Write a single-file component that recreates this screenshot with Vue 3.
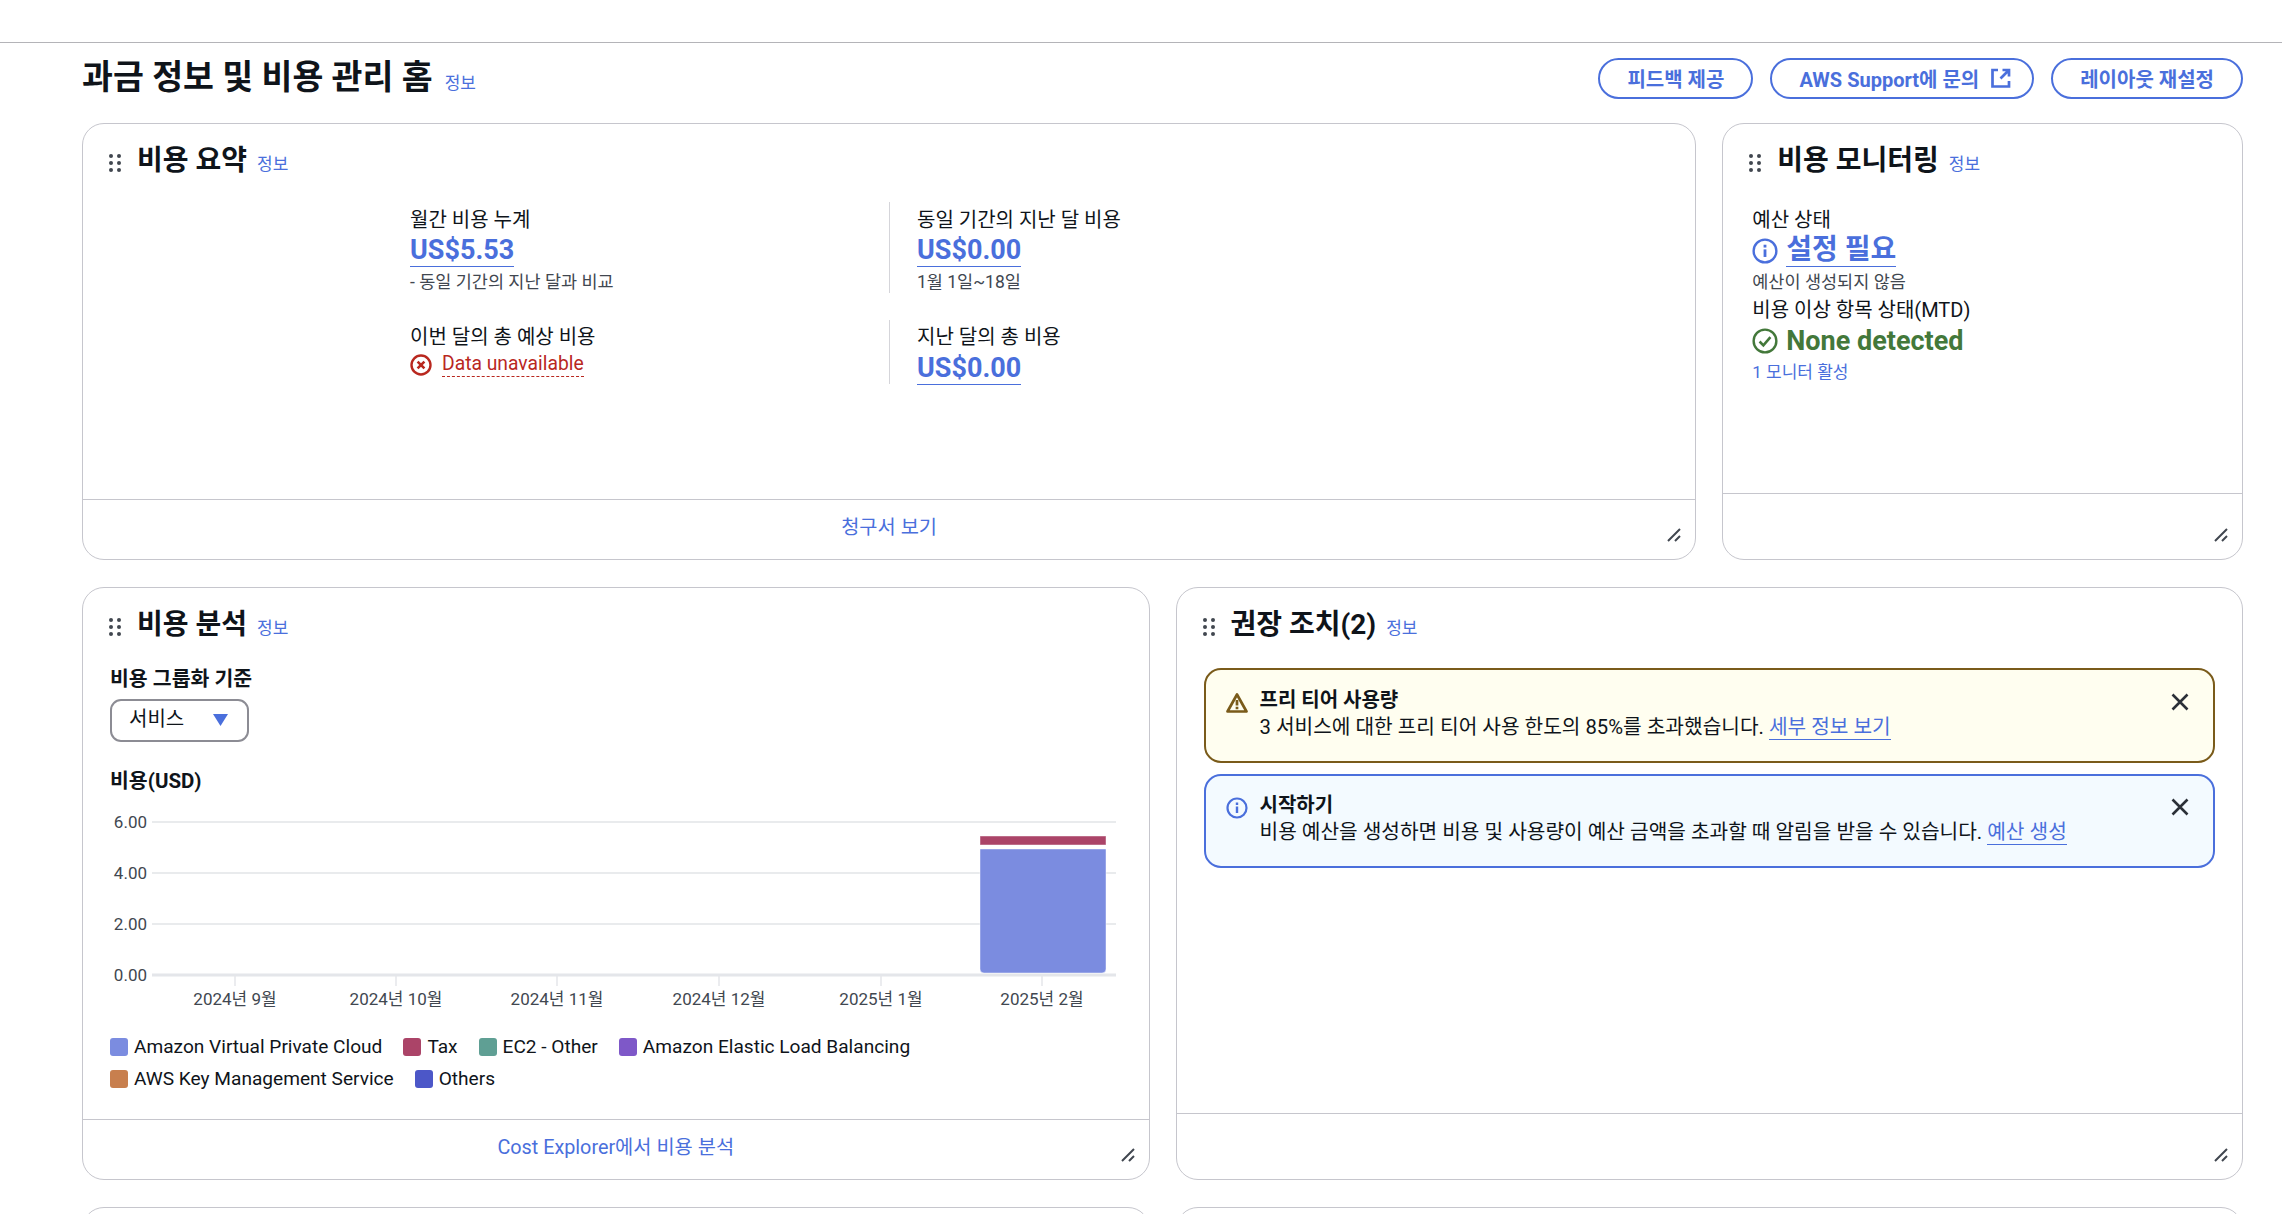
<script setup>
const months = [
  { label: '2024년 9월', x: 235 },
  { label: '2024년 10월', x: 396 },
  { label: '2024년 11월', x: 557 },
  { label: '2024년 12월', x: 719 },
  { label: '2025년 1월', x: 881 },
  { label: '2025년 2월', x: 1042 },
]
const yTicks = [
  { label: '6.00', y: 822 },
  { label: '4.00', y: 873 },
  { label: '2.00', y: 924 },
]
const legend = [
  { name: 'Amazon Virtual Private Cloud', color: '#7b8ce0' },
  { name: 'Tax', color: '#ab4468' },
  { name: 'EC2 - Other', color: '#5f9f94' },
  { name: 'Amazon Elastic Load Balancing', color: '#7e58c8' },
  { name: 'AWS Key Management Service', color: '#c87f4e' },
  { name: 'Others', color: '#4c57c8' },
]
</script>

<template>
  <div class="page">
    <div class="topbar"></div>

    <header class="title-row">
      <div class="title-left">
        <h1>과금 정보 및 비용 관리 홈</h1>
        <a class="info">정보</a>
      </div>
      <div class="actions">
        <button class="btn">피드백 제공</button>
        <button class="btn with-icon">
          AWS Support에 문의
          <svg class="ext" viewBox="0 0 20 20" width="20" height="20" fill="none" stroke="currentColor" stroke-width="2.7">
            <path d="M7 2H1.5v16.5H18V13" />
            <path d="M11.5 2H18v6.5M18 2L9.5 10.5" />
          </svg>
        </button>
        <button class="btn">레이아웃 재설정</button>
      </div>
    </header>

    <div class="grid">
      <!-- 비용 요약 -->
      <section class="card span3">
        <div class="card-head">
          <span class="grip"><i v-for="n in 6" :key="n"></i></span>
          <h2>비용 요약</h2>
          <a class="info">정보</a>
        </div>
        <div class="card-body summary">
          <div class="cell">
            <div class="label">월간 비용 누계</div>
            <a class="value">US$5.53</a>
            <div class="sub">- 동일 기간의 지난 달과 비교</div>
          </div>
          <div class="cell sep">
            <div class="label">동일 기간의 지난 달 비용</div>
            <a class="value">US$0.00</a>
            <div class="sub">1월 1일~18일</div>
          </div>
          <div class="cell lower">
            <div class="label">이번 달의 총 예상 비용</div>
            <div class="unavail">
              <svg viewBox="0 0 22 22" width="22" height="22" fill="none" stroke="#b9281f">
                <circle cx="11" cy="11" r="9.5" stroke-width="2.4" />
                <path d="M7.6 7.6l6.8 6.8M14.4 7.6l-6.8 6.8" stroke-width="2.6" />
              </svg>
              <span>Data unavailable</span>
            </div>
          </div>
          <div class="cell sep lower">
            <div class="label">지난 달의 총 비용</div>
            <a class="value">US$0.00</a>
          </div>
        </div>
        <div class="card-foot">
          <a class="foot-link">청구서 보기</a>
          <svg class="resize" viewBox="0 0 14 14" width="14" height="14" stroke="#414750" stroke-width="2">
            <path d="M1 13L13 1M8 13l5-5" />
          </svg>
        </div>
      </section>

      <!-- 비용 모니터링 -->
      <section class="card">
        <div class="card-head">
          <span class="grip"><i v-for="n in 6" :key="n"></i></span>
          <h2>비용 모니터링</h2>
          <a class="info">정보</a>
        </div>
        <div class="card-body monitor">
          <div class="label">예산 상태</div>
          <div class="status">
            <svg viewBox="0 0 24 24" width="26" height="26" fill="none" stroke="#4a6fdc">
              <circle cx="12" cy="12" r="10.5" stroke-width="2.2" />
              <path d="M12 10.5v7" stroke-width="2.6" />
              <path d="M12 6.2v2.6" stroke-width="2.6" />
            </svg>
            <a class="value hangul">설정 필요</a>
          </div>
          <div class="sub">예산이 생성되지 않음</div>
          <div class="label anomaly">비용 이상 항목 상태(MTD)</div>
          <div class="status ok">
            <svg viewBox="0 0 24 24" width="26" height="26" fill="none" stroke="#43783a">
              <circle cx="12" cy="12" r="10.5" stroke-width="2.2" />
              <path d="M7 12.5l3.5 3.5L17 8.5" stroke-width="2.4" />
            </svg>
            <span>None detected</span>
          </div>
          <a class="monitors">1 모니터 활성</a>
        </div>
        <div class="card-foot tall">
          <svg class="resize" viewBox="0 0 14 14" width="14" height="14" stroke="#414750" stroke-width="2">
            <path d="M1 13L13 1M8 13l5-5" />
          </svg>
        </div>
      </section>

      <!-- 비용 분석 -->
      <section class="card span2">
        <div class="card-head">
          <span class="grip"><i v-for="n in 6" :key="n"></i></span>
          <h2>비용 분석</h2>
          <a class="info">정보</a>
        </div>
        <div class="card-body analysis">
          <div class="field-label">비용 그룹화 기준</div>
          <div class="select">
            <span>서비스</span>
            <svg viewBox="0 0 15 12" width="15" height="12"><path d="M0 0h15L7.5 12z" fill="#4a6fdc" /></svg>
          </div>
          <div class="field-label chart-title">비용(USD)</div>
          <!-- viewBox uses page coordinates so the numbers read like the screenshot -->
          <svg class="chart" viewBox="110 812 1020 200" width="1020" height="200">
            <line v-for="t in yTicks" :key="t.label" x1="152" x2="1116" :y1="t.y" :y2="t.y" stroke="#e9ebed" stroke-width="2" />
            <text v-for="t in yTicks" :key="'y' + t.label" x="147" :y="t.y + 6" text-anchor="end" class="tick">{{ t.label }}</text>
            <rect x="980" y="836" width="126" height="9" fill="#ab4468" stroke="#fff" stroke-opacity=".45" />
            <path d="M980 849h126v120a4 4 0 0 1-4 4H984a4 4 0 0 1-4-4z" fill="#7b8ce0" stroke="#fff" stroke-opacity=".45" />
            <line x1="152" x2="1116" y1="975" y2="975" stroke="#e4e6ea" stroke-width="3" />
            <text x="147" y="981" text-anchor="end" class="tick">0.00</text>
            <g v-for="m in months" :key="m.label">
              <line :x1="m.x" :x2="m.x" y1="976" y2="986" stroke="#e4e6ea" stroke-width="1.5" />
              <text :x="m.x" y="1005" text-anchor="middle" class="tick">{{ m.label }}</text>
            </g>
          </svg>
          <ul class="legend">
            <li v-for="l in legend" :key="l.name">
              <i :style="{ background: l.color }"></i>{{ l.name }}
            </li>
          </ul>
        </div>
        <div class="card-foot">
          <a class="foot-link">Cost Explorer에서 비용 분석</a>
          <svg class="resize" viewBox="0 0 14 14" width="14" height="14" stroke="#414750" stroke-width="2">
            <path d="M1 13L13 1M8 13l5-5" />
          </svg>
        </div>
      </section>

      <!-- 권장 조치 -->
      <section class="card span2">
        <div class="card-head">
          <span class="grip"><i v-for="n in 6" :key="n"></i></span>
          <h2>권장 조치(2)</h2>
          <a class="info">정보</a>
        </div>
        <div class="card-body alerts">
          <div class="alert warn">
            <svg class="alert-icon" viewBox="0 0 22 22" width="22" height="22" fill="none" stroke="#7a5b1a" stroke-width="2.7">
              <path d="M11 2.5L20.5 19.5h-19z" stroke-linejoin="round" />
              <path d="M11 8v5.5M11 14.8v2.4" />
            </svg>
            <div class="alert-text">
              <strong>프리 티어 사용량</strong>
              <p>3 서비스에 대한 프리 티어 사용 한도의 85%를 초과했습니다. <a>세부 정보 보기</a></p>
            </div>
            <svg class="close" viewBox="0 0 18 18" width="18" height="18" stroke="#2b3038" stroke-width="2.6">
              <path d="M1.5 1.5l15 15M16.5 1.5l-15 15" />
            </svg>
          </div>
          <div class="alert note">
            <svg class="alert-icon" viewBox="0 0 22 22" width="22" height="22" fill="none" stroke="#4a6fdc">
              <circle cx="11" cy="11" r="9.5" stroke-width="2.2" />
              <path d="M11 9.5v6.5M11 5.6v2.4" stroke-width="2.4" />
            </svg>
            <div class="alert-text">
              <strong>시작하기</strong>
              <p>비용 예산을 생성하면 비용 및 사용량이 예산 금액을 초과할 때 알림을 받을 수 있습니다. <a>예산 생성</a></p>
            </div>
            <svg class="close" viewBox="0 0 18 18" width="18" height="18" stroke="#2b3038" stroke-width="2.6">
              <path d="M1.5 1.5l15 15M16.5 1.5l-15 15" />
            </svg>
          </div>
        </div>
        <div class="card-foot tall">
          <svg class="resize" viewBox="0 0 14 14" width="14" height="14" stroke="#414750" stroke-width="2">
            <path d="M1 13L13 1M8 13l5-5" />
          </svg>
        </div>
      </section>

      <section class="card span2"></section>
      <section class="card span2"></section>
    </div>
  </div>
</template>

<style>
html, body {
  margin: 0;
  overflow: hidden;
  background: #fff;
}
</style>

<style scoped>
.page {
  height: 1214px;
  overflow: hidden;
  box-sizing: border-box;
  padding: 0 39px 0 82px;
  font-family: Roboto, "Noto Sans CJK KR", sans-serif;
  font-size: 20px;
  color: #0f141a;
  background: #fff;
}

.topbar {
  height: 42px;
  margin: 0 -39px 0 -82px;
  border-bottom: 1px solid #b4b4b8;
}

.title-row {
  height: 80px;
  box-sizing: border-box;
  padding-bottom: 10px;
  display: flex;
  align-items: center;
  justify-content: space-between;
}

.title-left {
  display: flex;
  align-items: baseline;
  gap: 12px;
}

h1 {
  margin: 0;
  font-size: 33.6px;
  font-weight: 700;
  line-height: 44px;
}

h2 {
  margin: 0;
  font-size: 28px;
  font-weight: 700;
  line-height: 36px;
}

.info {
  font-size: 17px;
  color: #4a6fdc;
}

.actions {
  display: flex;
  gap: 17px;
}

.btn {
  height: 41px;
  padding: 0 27px;
  display: flex;
  align-items: center;
  gap: 12px;
  box-sizing: border-box;
  border: 2px solid #4a6fdc;
  border-radius: 21px;
  background: #fff;
  color: #4a6fdc;
  font-family: inherit;
  font-size: 20px;
  font-weight: 700;
}

.btn.with-icon {
  padding-right: 21px;
}

.ext {
  flex: none;
}

.grid {
  display: grid;
  grid-template-columns: repeat(4, 1fr);
  grid-template-rows: 437px 593px 300px;
  column-gap: 26px;
  row-gap: 27px;
}

.card {
  display: flex;
  flex-direction: column;
  border: 1px solid #c6c6cd;
  border-radius: 22px;
  background: #fff;
  min-width: 0;
}

.span3 {
  grid-column: span 3;
}

.span2 {
  grid-column: span 2;
}

.card-head {
  display: flex;
  align-items: baseline;
  padding: 19px 26px 0;
  height: 36px;
}

.card-head h2 {
  margin-left: 16px;
}

.card-head .info {
  margin-left: 10px;
}

.grip {
  align-self: center;
  display: grid;
  grid-template-columns: 4px 4px;
  gap: 3px 4px;
  margin-top: 4px;
}

.grip i {
  width: 4px;
  height: 4px;
  border-radius: 50%;
  background: #414750;
}

.card-body {
  flex: 1;
  min-height: 0;
}

.card-foot {
  position: relative;
  height: 60px;
  box-sizing: border-box;
  padding-bottom: 8px;
  border-top: 1px solid #c6c6cd;
  display: flex;
  align-items: center;
  justify-content: center;
}

.card-foot.tall {
  height: 66px;
}

.foot-link {
  color: #4a6fdc;
  font-size: 19.8px;
}

.resize {
  position: absolute;
  right: 14px;
  bottom: 17px;
}

.summary {
  display: grid;
  grid-template-columns: 479px 479px;
  grid-template-rows: 91px 64px;
  row-gap: 27px;
  margin: 23px 0 0 327px;
  align-content: start;
}

.cell.sep {
  border-left: 1px solid #d5d5da;
  padding-left: 27px;
}

.label {
  font-size: 20px;
  line-height: 28px;
  margin-top: 4px;
}

.lower .label {
  margin: 3px 0 1px;
}

.value {
  display: inline-block;
  font-size: 27px;
  font-weight: 700;
  line-height: 32px;
  color: #4a6fdc;
  border-bottom: 1px solid #4a6fdc;
}

.value.hangul {
  font-size: 28px;
}

.sub {
  font-size: 17.5px;
  line-height: 24px;
  margin-top: 3px;
  color: #414750;
}

.unavail {
  display: flex;
  align-items: center;
  gap: 10px;
  color: #b9281f;
  font-size: 19.3px;
  line-height: 28px;
  margin-top: 1px;
}

.unavail span {
  border-bottom: 1px dashed #b9281f;
  line-height: 24px;
}

.monitor {
  padding: 23px 28px 0 29px;
}

.status {
  display: flex;
  align-items: center;
  gap: 8px;
  height: 33px;
}

.status.ok {
  color: #43783a;
  font-size: 27px;
  font-weight: 700;
  height: 36px;
  margin-top: -1px;
}

.anomaly {
  margin-top: 2px;
}

.monitors {
  display: block;
  margin-top: 1px;
  color: #4a6fdc;
  font-size: 17px;
  line-height: 24px;
}

.analysis {
  padding: 21.5px 27px 0;
}

.field-label {
  font-size: 20.5px;
  font-weight: 700;
  line-height: 28px;
}

.select {
  width: 139px;
  height: 43px;
  margin-top: 6px;
  padding: 0 19px 0 17px;
  box-sizing: border-box;
  display: flex;
  align-items: center;
  justify-content: space-between;
  border: 2px solid #8c8c94;
  border-radius: 11px;
}

.select span {
  margin-top: -5px;
}

.chart-title {
  margin-top: 25px;
}

.chart {
  display: block;
  margin-top: 17px;
}

.tick {
  font-family: Roboto, "Noto Sans CJK KR", sans-serif;
  font-size: 17px;
  fill: #414750;
}

.legend {
  list-style: none;
  margin: 21px 0 0;
  padding: 0;
  display: flex;
  flex-wrap: wrap;
  row-gap: 4px;
  column-gap: 21px;
  max-width: 960px;
  font-size: 19.1px;
  line-height: 28px;
}

.legend li {
  display: flex;
  align-items: center;
}

.legend i {
  width: 18px;
  height: 18px;
  margin-right: 6px;
  border-radius: 3px;
}

.alerts {
  display: flex;
  flex-direction: column;
  gap: 11px;
  padding: 25px 27px 0;
}

.alert {
  display: flex;
  align-items: flex-start;
  box-sizing: border-box;
  border-radius: 17px;
  border: 2.5px solid;
  padding: 17px 24px 0 20px;
}

.warn {
  height: 95px;
  padding-top: 18px;
  border-color: #7a5b1a;
  background: #fffef0;
}

.note {
  height: 94px;
  border-color: #4a6fdc;
  background: #f3faff;
}

.alert-icon {
  flex: none;
  margin: 4px 12px 0 0;
}

.alert-text {
  flex: 1;
}

.alert-text strong {
  display: block;
  font-size: 20px;
  line-height: 24px;
}

.alert-text p {
  margin: 1px 0 0;
  font-size: 20.25px;
  line-height: 28px;
}

.alert-text a {
  color: #4a6fdc;
  border-bottom: 1px solid #4a6fdc;
}

.close {
  flex: none;
  margin-top: 5px;
}
</style>
